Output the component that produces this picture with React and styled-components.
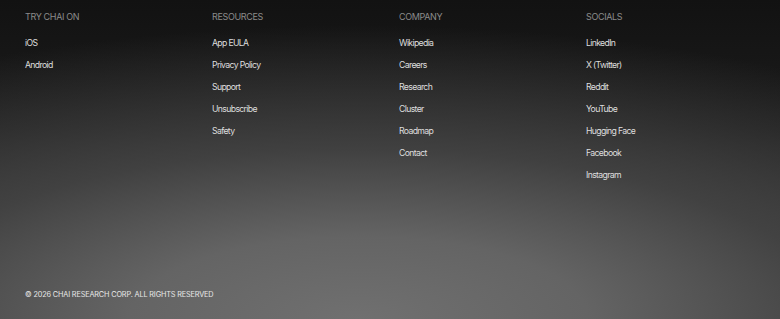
import React from "react";
import styled, { createGlobalStyle } from "styled-components";

const Global = createGlobalStyle`
  html, body { margin: 0; padding: 0; background: #141414; }
  body { font-family: Inter, "Liberation Sans", Arial, sans-serif; -webkit-font-smoothing: antialiased; }
  * { box-sizing: border-box; }
`;

const Footer = styled.footer`
  width: 780px;
  height: 319px;
  display: flex;
  flex-direction: column;
  justify-content: space-between;
  padding: 11px 23px 19px 25px;
  background:
    radial-gradient(ellipse 105% 92% at 46% 100%, rgba(112,112,112,1) 0%, rgba(100,100,100,1) 28%, rgba(70,70,70,0.85) 58%, rgba(20,20,20,0) 100%),
    linear-gradient(180deg, #121212 0%, #1c1c1c 40%, #3a3a3a 100%);
  overflow: hidden;
`;

const Columns = styled.div`
  display: grid;
  grid-template-columns: repeat(4, 1fr);
  column-gap: 16px;
`;

const Column = styled.div`
  display: flex;
  flex-direction: column;
`;

const Heading = styled.h3`
  margin: 0 0 14px;
  font-size: 9px;
  line-height: 12px;
  font-weight: 400;
  letter-spacing: -0.04em;
  color: #8b8b8b;
  text-transform: uppercase;
`;

const List = styled.ul`
  list-style: none;
  margin: 0;
  padding: 0;
  display: flex;
  flex-direction: column;
  gap: 10px;
`;

const Link = styled.a`
  display: block;
  font-size: 8.7px;
  line-height: 12px;
  letter-spacing: -0.075em;
  color: #dedede;
  text-decoration: none;
`;

const Copyright = styled.p`
  margin: 0;
  font-size: 7.3px;
  line-height: 10px;
  letter-spacing: -0.02em;
  color: #e8e8e8;
  text-transform: uppercase;
`;

const columns = [
  { title: "Try Chai On", links: ["iOS", "Android"] },
  { title: "Resources", links: ["App EULA", "Privacy Policy", "Support", "Unsubscribe", "Safety"] },
  { title: "Company", links: ["Wikipedia", "Careers", "Research", "Cluster", "Roadmap", "Contact"] },
  { title: "Socials", links: ["LinkedIn", "X (Twitter)", "Reddit", "YouTube", "Hugging Face", "Facebook", "Instagram"] },
];

export default function App() {
  return (
    <>
      <Global />
      <Footer>
        <Columns>
          {columns.map((c) => (
            <Column key={c.title}>
              <Heading>{c.title}</Heading>
              <List>
                {c.links.map((l) => (
                  <li key={l}>
                    <Link href="#">{l}</Link>
                  </li>
                ))}
              </List>
            </Column>
          ))}
        </Columns>
        <Copyright>© 2026 Chai Research Corp. All rights reserved</Copyright>
      </Footer>
    </>
  );
}
